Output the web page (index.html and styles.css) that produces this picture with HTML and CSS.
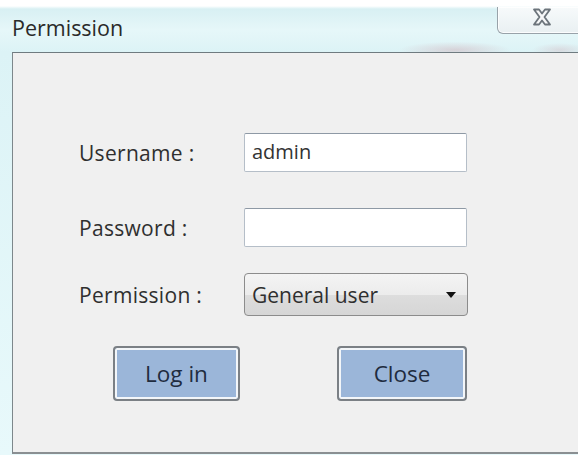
FILE: index.html
```html
<!DOCTYPE html>
<html>
<head>
<meta charset="utf-8">
<title>Permission</title>
<link rel="stylesheet" href="styles.css">
</head>
<body>
<div class="window">
  <div class="titlebar">
    <span class="title">Permission</span>
    <button class="close-x" aria-label="Close">
      <svg width="20" height="18" viewBox="0 0 20 18">
        <path d="M2 1.5 L7 1.5 L10 5.5 L13 1.5 L18 1.5 L12.5 9 L18 16.5 L13 16.5 L10 12.5 L7 16.5 L2 16.5 L7.5 9 Z" fill="#f6f7f8" stroke="#6c747b" stroke-width="1.8" stroke-linejoin="round"/>
      </svg>
    </button>
  </div>
  <div class="frame">
    <div class="client">
      <form class="form">
        <div class="row row-user">
          <label class="label">Username :</label>
          <div class="field">admin</div>
        </div>
        <div class="row row-pass">
          <label class="label">Password :</label>
          <div class="field"></div>
        </div>
        <div class="row row-perm">
          <label class="label">Permission :</label>
          <div class="select">
            <span>General user</span>
            <svg class="arrow" width="10" height="6" viewBox="0 0 10 6"><path d="M0 0 H10 L5 6 Z" fill="#111"/></svg>
          </div>
        </div>
        <div class="buttons">
          <button type="button" class="btn btn-login">Log in</button>
          <button type="button" class="btn btn-close">Close</button>
        </div>
      </form>
    </div>
  </div>
</div>
</body>
</html>
```
FILE: styles.css
```css
html, body {
  margin: 0;
  padding: 0;
  width: 578px;
  height: 455px;
  overflow: hidden;
  background: #fff;
}

.window {
  width: 578px;
  height: 455px;
  font-family: "Open Sans", "Noto Sans", sans-serif;
  color: #333;
  background:
    radial-gradient(ellipse 80px 12px at 455px 50px, rgba(205, 160, 170, 0.4), transparent 70%),
    radial-gradient(ellipse 40px 10px at 560px 50px, rgba(205, 160, 170, 0.3), transparent 70%),
    linear-gradient(180deg, #ffffff 0px, #ffffff 6px, #d8f0f3 9px, #e6f7f9 30px, #dcf3f6 52px, #e8f9fb 100%);
  display: flex;
  flex-direction: column;
}

.titlebar {
  height: 52px;
  position: relative;
  display: flex;
  align-items: center;
  padding-left: 12px;
}

.title {
  font-size: 21.5px;
  color: #2a2a2a;
  margin-top: 3px;
}

.close-x {
  position: absolute;
  top: 7px;
  left: 497px;
  width: 90px;
  height: 27px;
  border: 1px solid #98a2a9;
  border-top: none;
  border-radius: 0 0 6px 6px;
  background: linear-gradient(180deg, #f7fafb, #e9f0f2);
  padding: 0 0 0 34px;
  display: flex;
  align-items: flex-start;
  box-shadow: inset 0 0 0 1px rgba(255,255,255,0.8);
}

.close-x svg { display: block; margin-top: 1px; }

.frame {
  flex: 1;
  padding-left: 12px;
  display: flex;
}

.client {
  flex: 1;
  background: #f0f0f0;
  border-top: 1px solid #6f7b80;
  border-left: 1px solid #7d878b;
  border-bottom: 2px solid #8a8f92;
  margin-bottom: 1px;
}

.form {
  padding-top: 80px;
  padding-left: 66px;
  display: flex;
  flex-direction: column;
}

.row {
  display: flex;
  align-items: center;
}

.label {
  width: 165px;
  font-size: 21px;
  letter-spacing: 0.3px;
  color: #2f2f2f;
}

.row-pass { margin-top: 36px; }
.row-perm { margin-top: 26px; }

.field {
  width: 223px;
  height: 39px;
  box-sizing: border-box;
  border: 1px solid #b5bec8;
  border-top-color: #8e99a5;
  border-radius: 2px;
  background: #fff;
  font-size: 20px;
  line-height: 35px;
  padding-left: 7px;
  color: #333;
}

.select {
  width: 224px;
  height: 43px;
  box-sizing: border-box;
  border: 1px solid #8c8c8c;
  border-radius: 4px;
  background: linear-gradient(180deg, #f4f4f4 0%, #ececec 50%, #dddddd 51%, #d6d6d6 100%);
  display: flex;
  align-items: center;
  justify-content: space-between;
  padding: 0 11px 0 7px;
  font-size: 21px;
  color: #2f2f2f;
}

.arrow { display: block; margin-top: 1px; }

.buttons {
  display: flex;
  gap: 97px;
  margin-top: 30px;
  padding-left: 34px;
}

.btn {
  height: 55px;
  border: 2px solid #7b8085;
  border-radius: 4px;
  background: #9bb6d9;
  box-shadow: inset 0 0 0 2px #f3f6f9;
  font-family: "Open Sans", "Noto Sans", sans-serif;
  font-size: 22.5px;
  color: #1f2c3f;
  padding: 0;
}

.btn-login { width: 127px; }
.btn-close { width: 130px; }
```
